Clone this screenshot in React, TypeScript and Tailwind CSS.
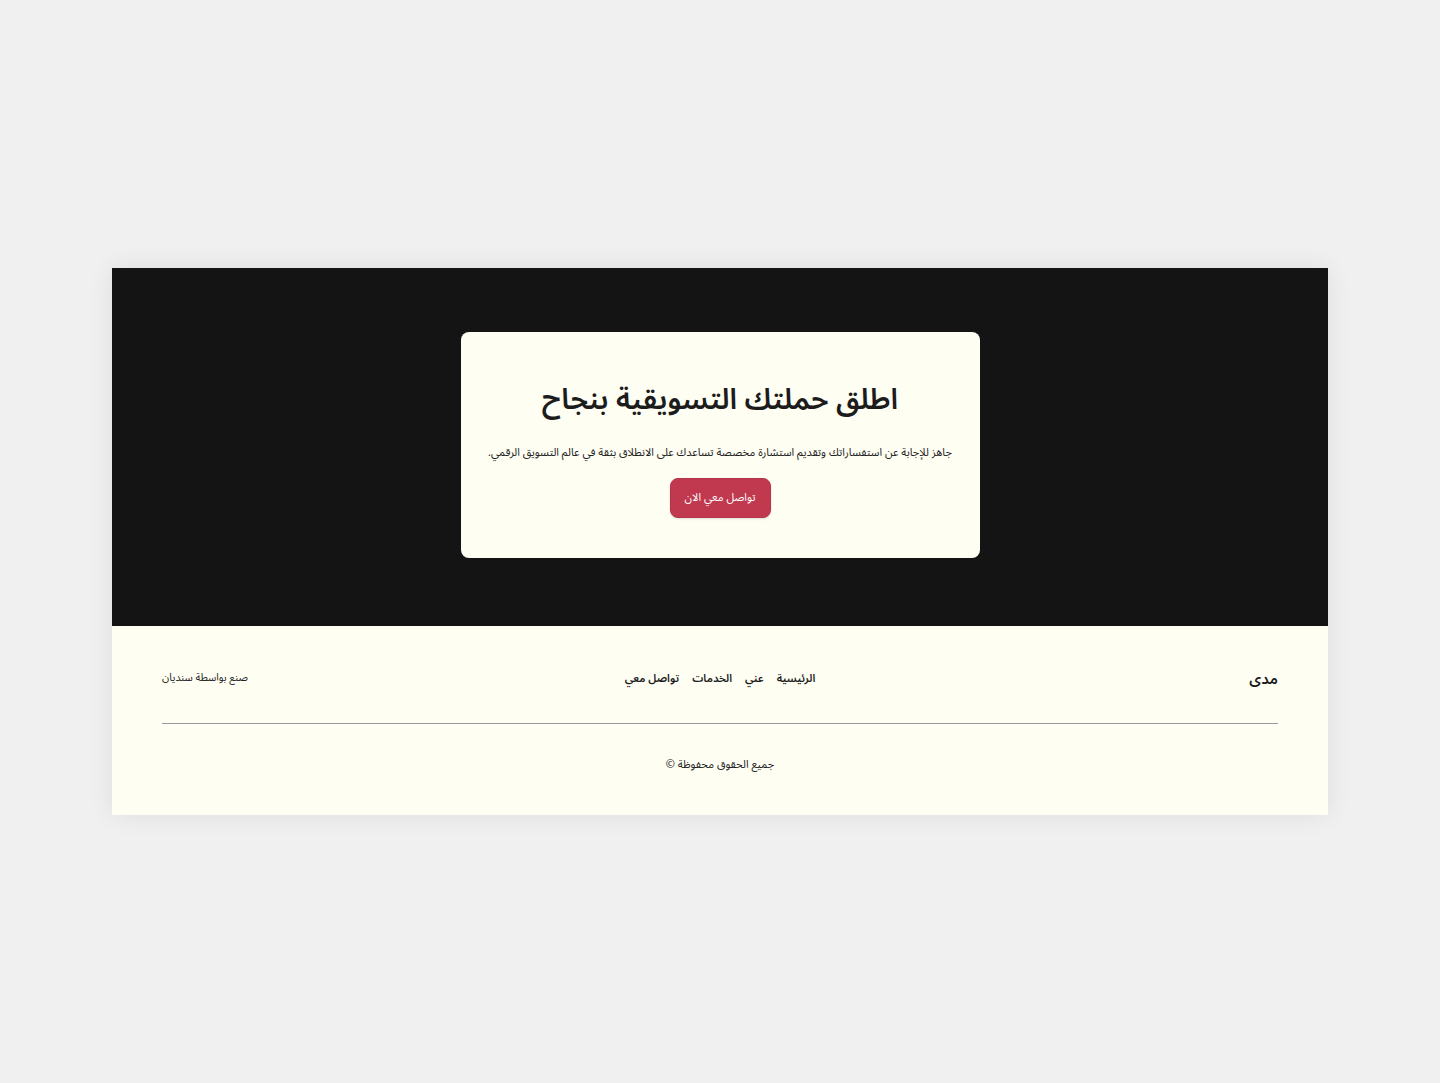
import React from 'react';

const navLinks = ['الرئيسية', 'عني', 'الخدمات', 'تواصل معي'];

export default function App() {
  return (
    <div
      dir="rtl"
      className="min-h-screen bg-[#f0f0f0] pt-[268px] px-[112px]"
      style={{ fontFamily: '"Noto Sans Arabic", "Noto Sans", sans-serif' }}
    >
      <div className="shadow-[0_0_24px_rgba(0,0,0,0.08)]">
        {/* hero */}
        <section className="bg-[#141414] h-[358px] flex items-start justify-center pt-[64px]">
          <div className="w-[519px] h-[226px] bg-[#fefef3] rounded-lg flex flex-col items-center px-[30px] pt-[48px]">
            <h1 className="text-[29px] font-semibold text-[#1c1c1c] leading-[40px]">اطلق حملتك التسويقية بنجاح</h1>
            <p className="mt-[23px] text-[11px] text-[#222] leading-[20px] whitespace-nowrap">
              جاهز للإجابة عن استفساراتك وتقديم استشارة مخصصة تساعدك على الانطلاق بثقة في عالم التسويق الرقمي.
            </p>
            <button className="mt-[15px] w-[101px] h-[40px] rounded-lg bg-[#c0394f] border border-[#b5324a] text-white text-[11px] shadow-sm">
              تواصل معي الان
            </button>
          </div>
        </section>

        {/* footer */}
        <footer className="bg-[#fefef3] px-[50px] h-[189px]">
          <div className="flex items-center justify-between h-[97px] pt-[9px]">
            <div className="text-[15px] font-semibold text-[#1c1c1c] w-[200px]">مدى</div>
            <nav className="flex items-center gap-[13px] text-[11px] font-semibold text-[#1c1c1c]">
              {navLinks.map((l) => (
                <a key={l} href="#">{l}</a>
              ))}
            </nav>
            <div className="text-[10.5px] text-[#222] w-[200px] text-left">صنع بواسطة سنديان</div>
          </div>
          <div className="border-t border-[#999]" />
          <div className="text-center text-[11px] text-[#222] pt-[33px]">جميع الحقوق محفوظة ©</div>
        </footer>
      </div>
    </div>
  );
}
